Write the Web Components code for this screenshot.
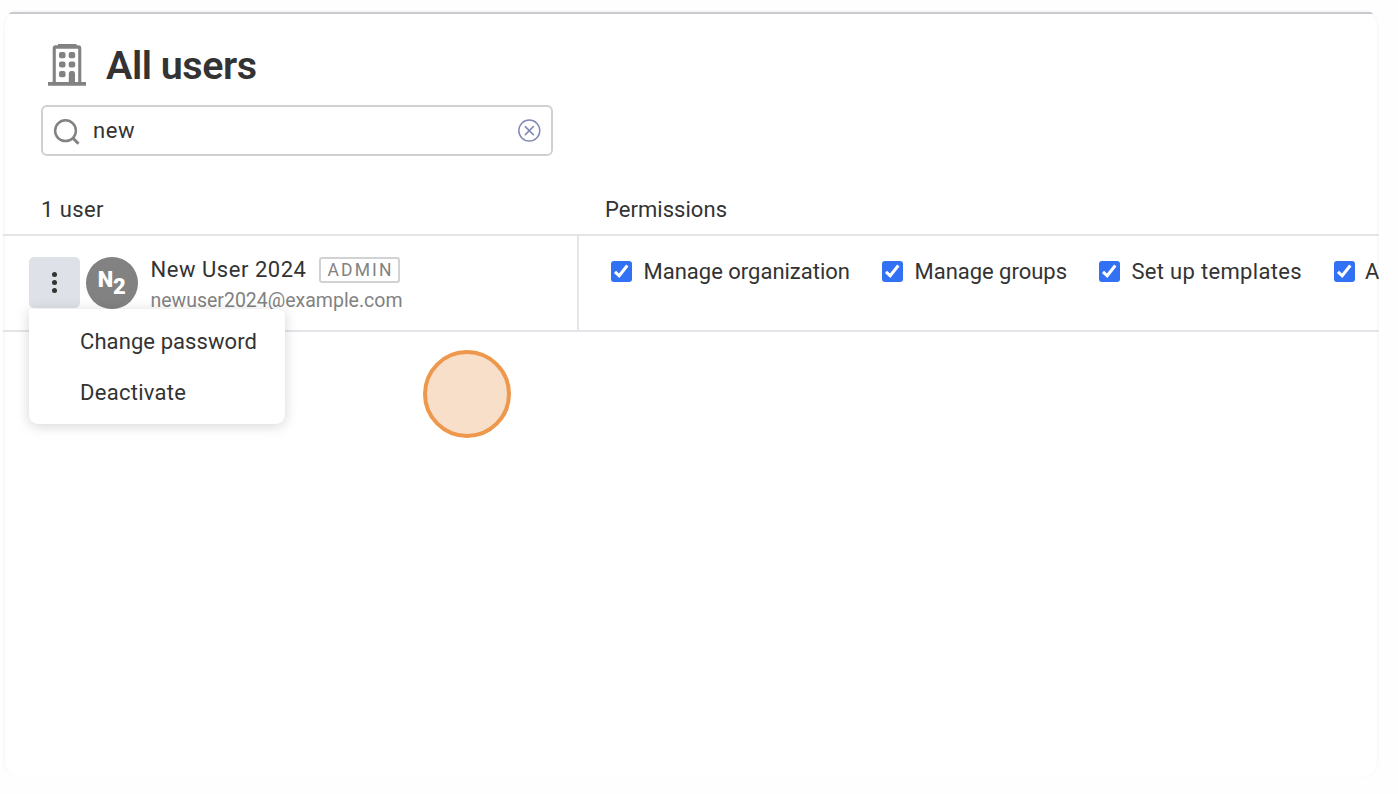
<!DOCTYPE html>
<html lang="en">
<head>
<meta charset="utf-8">
<title>All users</title>
<style>
html,body{margin:0;background:#fefefe}
body{height:794px;overflow:hidden;font-family:Roboto,"Noto Sans",sans-serif;color:#333;font-size:22px}
</style>
</head>
<body>
<users-page></users-page>
<script>
const define = (name, html, setup) => {
  const t = document.createElement('template');
  t.innerHTML = html;
  customElements.define(name, class extends HTMLElement {
    connectedCallback() {
      if (this.shadowRoot) return;
      this.attachShadow({mode: 'open'}).append(t.content.cloneNode(true));
      if (setup) setup(this, this.shadowRoot);
    }
  });
};

/* A single line of text whose tracking is adjusted to a given advance width. */
define('text-run', `<style>
:host{display:inline-block;white-space:nowrap;flex:none}
span{display:inline-block}
</style><span><slot></slot></span>`, (el, root) => {
  const span = root.querySelector('span');
  const want = parseFloat(el.getAttribute('width'));
  if (!want) return;
  const n = el.textContent.length;
  const natural = span.getBoundingClientRect().width;
  span.style.letterSpacing = ((want - natural) / (n - 1)) + 'px';
  el.style.width = want + 'px';
});

define('building-icon', `<style>:host{display:block;width:38px;height:43px}svg{display:block}</style>
<svg width="38" height="43" viewBox="0 0 38 43" fill="#828282">
<path fill-rule="evenodd" d="M10 0H28.500V1.300H30.500Q33.300 1.300 33.300 4.200V38H38V41.700H0V38H4.700V4.200Q4.700 1.300 7.500 1.300H10ZM7.800 4.800V38H20.800V29.500Q20.800 27 23 27H25Q27 27 27 29.500V38H30.200V4.800Z"/>
<rect x="11" y="8" width="6.500" height="6.200" rx="2"/><rect x="20.700" y="8" width="6.500" height="6.200" rx="2"/>
<rect x="11" y="17.400" width="6.500" height="6.200" rx="2"/><rect x="20.700" y="17.400" width="6.500" height="6.200" rx="2"/>
<rect x="11" y="27" width="6.500" height="6.200" rx="2"/></svg>`);

define('page-title', `<style>
:host{display:flex;align-items:center;height:51px;padding:30px 0 0 45px;font-size:39.500px;font-weight:600;line-height:51px}
building-icon{margin-right:20px}
</style><building-icon></building-icon><slot></slot>`);

define('search-box', `<style>
:host{display:flex;align-items:center;box-sizing:border-box;width:512px;height:51px;margin:14px 0 0 38px;border:2px solid #d0d0d3;border-radius:6px;padding:0 10px;background:#fff}
svg{display:block;flex:none}.t{margin-left:12px;flex:1}
</style>
<svg width="28" height="28" viewBox="0 0 28 28" fill="none" stroke="#828282" stroke-width="2.500"><circle cx="12.500" cy="13.700" r="10.400"/><path d="M19.800 21L25.500 26.700" stroke-width="3"/></svg>
<div class="t"><slot></slot></div>
<svg width="24" height="24" viewBox="0 0 24 24" fill="none" stroke="#838bb4" stroke-width="1.500" stroke-linecap="round"><circle cx="12.300" cy="11.600" r="10.500"/><path d="M8.300 7.600l8 8M16.300 7.600l-8 8"/></svg>`);

define('table-head', `<style>
:host{display:grid;grid-template-columns:564px 1fr;height:50px;margin-top:28px;padding-left:38px;line-height:52px;border-bottom:2px solid #e3e5e7;box-sizing:content-box}
</style><slot></slot>`);

define('admin-tag', `<style>
:host{display:flex;align-items:center;justify-content:center;box-sizing:border-box;width:81px;height:26px;border:2px solid #d0d2d4;border-radius:3px;font-size:17.500px;color:#828282;line-height:24px}
text-run{margin-top:1px}
</style><slot></slot>`);

define('menu-button', `<style>
:host{display:flex;flex-direction:column;align-items:center;justify-content:center;gap:3px;width:51px;height:51px;border-radius:5px;background:#dee1e7}
i{width:5px;height:5px;border-radius:50%;background:#333}
</style><i></i><i></i><i></i>`);

define('user-avatar', `<style>
:host{display:flex;justify-content:center;align-items:center;width:51.500px;height:51.500px;border-radius:50%;background:#828282;color:#fff;font-weight:900;font-size:22px;line-height:24px}
.a{margin-top:-5px}.b{margin-top:8px}
</style><span class="a">N</span><span class="b">2</span>`);

define('action-menu', `<style>
:host{position:absolute;left:26px;top:73px;width:256px;height:115px;box-sizing:border-box;padding:7px 0 6px 51px;border-radius:2px 6px 9px 9px;background:#fff;box-shadow:0 2px 13px rgba(0,0,0,.17);line-height:51px;z-index:2}
div{height:51px}
</style><div><text-run width="177">Change password</text-run></div><div><text-run width="106">Deactivate</text-run></div>`);

define('check-item', `<style>
:host{display:flex;align-items:center;flex:none;height:30px;line-height:30px}
svg{display:block;margin:0 11.500px 2px 0}
</style><svg width="21" height="21" viewBox="0 0 21 21"><rect width="21" height="21" rx="3" fill="#3271f4"/><path d="M4 10.800L8.200 14.800L16.300 4.500" fill="none" stroke="#fff" stroke-width="3"/></svg><slot></slot>`);

define('user-row', `<style>
:host{display:grid;grid-template-columns:574px 1fr;position:relative;height:94px;border-bottom:2px solid #e3e5e9}
.left{display:flex;border-right:2px solid #e3e5e9;padding:21px 0 0 26px;box-sizing:border-box;width:576px}
user-avatar{margin-left:6px}
.who{margin-left:13px}
.name{display:flex;align-items:center;height:24px;line-height:24px;margin-top:1px}
admin-tag{margin-left:13px}
.mail{font-size:19.500px;color:#828282;line-height:24px;margin-top:7px}
.right{display:flex;gap:32px;padding:21px 0 0 34px;min-width:0;overflow:hidden}
</style>
<div class="left"><menu-button></menu-button><user-avatar></user-avatar>
<div class="who"><div class="name"><text-run width="155.500">New User 2024</text-run><admin-tag><text-run width="64">ADMIN</text-run></admin-tag></div>
<div class="mail"><text-run width="252">newuser2024@example.com</text-run></div></div></div>
<div class="right">
<check-item><text-run width="206.500">Manage organization</text-run></check-item>
<check-item><text-run width="152.500">Manage groups</text-run></check-item>
<check-item><text-run width="170">Set up templates</text-run></check-item>
<check-item><text-run style="margin-left:-1px;width:12px">A</text-run></check-item>
</div>
<action-menu></action-menu>`);

define('click-marker', `<style>
:host{position:absolute;left:423px;top:350px;width:80px;height:80px;border:4px solid #ee984d;border-radius:50%;background:#f8dfca}
</style>`);

define('users-page', `<style>
:host{display:block;height:794px;padding-left:3px;box-sizing:border-box;overflow:hidden;padding-top:10px}
main{width:1376px;height:768px;border-radius:16px;overflow:hidden;background:#fff;box-shadow:inset 2px 0 3px #f9f9fb,inset -2px 0 3px #f9f9fb}
.bar{height:2px;background:#f7f7f9;border-bottom:2px solid #c9c9ce;margin-bottom:-4px}
</style>
<main><div class="bar"></div>
<page-title><text-run width="151">All users</text-run></page-title>
<search-box><text-run width="41.500">new</text-run></search-box>
<table-head><text-run width="62.500">1 user</text-run><text-run width="122">Permissions</text-run></table-head>
<user-row></user-row></main>
<click-marker></click-marker>`);
</script>
</body>
</html>
